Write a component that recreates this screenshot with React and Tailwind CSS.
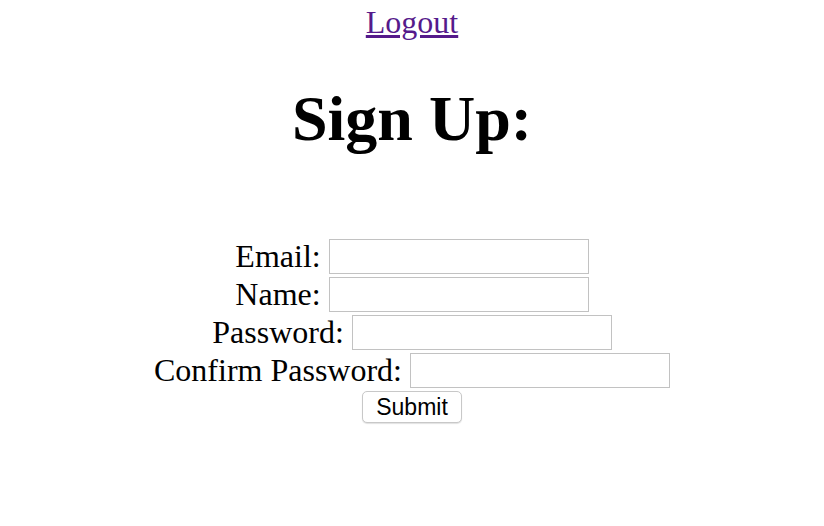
export default function App() {
  const rows = [
    { label: "Email:", type: "email" },
    { label: "Name:", type: "text" },
    { label: "Password:", type: "password" },
    { label: "Confirm Password:", type: "password" },
  ]

  return (
    <main className="flex min-h-screen flex-col items-center bg-white pt-[4px] font-['Liberation_Serif',serif] text-[32px] text-black">
      <a href="#" className="leading-[37px] text-[#551a8b] underline">
        Logout
      </a>
      <h1 className="mt-[41px] text-[64px] font-bold leading-[74px]">Sign Up:</h1>
      <form className="mt-[81px] flex flex-col items-center">
        {rows.map((row) => (
          <div key={row.label} className="flex h-[38px] items-center">
            <label className="leading-[37px]">{row.label}</label>
            <input
              type={row.type}
              className="ml-[8px] h-[35px] w-[260px] border border-[#c2c2c2] bg-white px-1 text-[16px] outline-none"
            />
          </div>
        ))}
        <button
          type="submit"
          className="mt-[2px] h-[32px] w-[100px] rounded-[5px] border border-[#c8c8c8] bg-white font-['Liberation_Sans',sans-serif] text-[23px] leading-none shadow-[0_1px_1px_rgba(0,0,0,0.12)]"
        >
          Submit
        </button>
      </form>
    </main>
  )
}
